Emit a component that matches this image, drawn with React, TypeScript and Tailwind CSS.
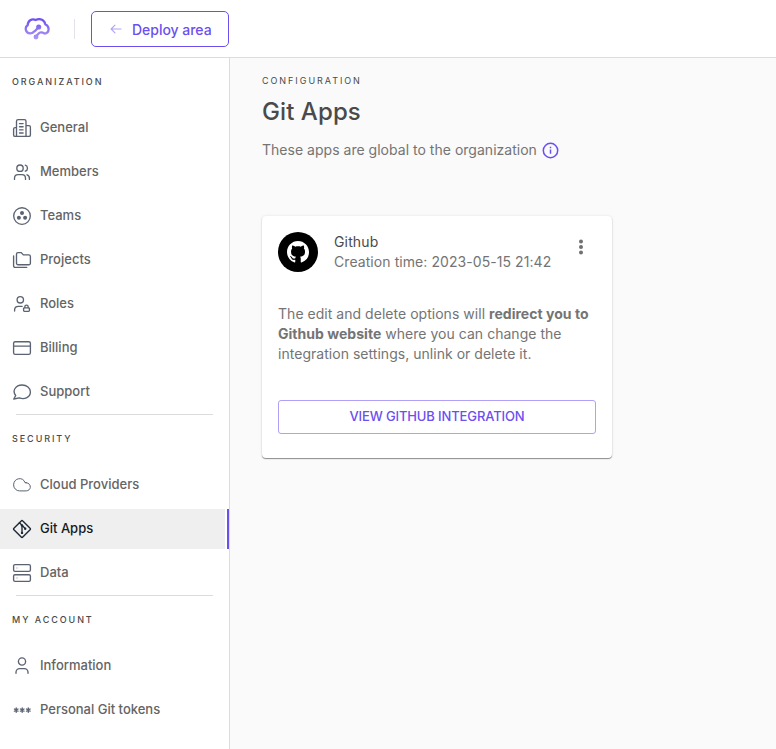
import type { ReactNode } from "react";

function Icon({ children }: { children: ReactNode }) {
  return (
    <svg
      width="20"
      height="20"
      viewBox="0 0 20 20"
      fill="none"
      stroke="currentColor"
      strokeWidth="1.35"
      strokeLinecap="round"
      strokeLinejoin="round"
      className="shrink-0"
    >
      {children}
    </svg>
  );
}

const icons = {
  general: (
    <Icon>
      <path d="M4.5 18.4V3.2A1.6 1.6 0 0 1 6.1 1.6h6.3A1.6 1.6 0 0 1 14 3.2v15.2M4.5 9.6H3.1a1.5 1.5 0 0 0-1.5 1.5v5.8a1.5 1.5 0 0 0 1.5 1.5h13.8a1.5 1.5 0 0 0 1.5-1.5V9.1a1.5 1.5 0 0 0-1.5-1.5H14M7.5 5.6h3.6M7.5 8.7h3.6M7.5 11.8h3.6M7.5 15h3.6" />
    </Icon>
  ),
  members: (
    <Icon>
      <circle cx="8" cy="6.2" r="3.2" />
      <path d="M2.5 17.4v-1.2c0-2.2 1.7-3.6 3.6-3.6h3.8c2 0 3.6 1.5 3.6 3.6v1.2M13.3 3.2c2.9.8 2.9 5.1 0 6M15 12.8c1.6.5 2.4 1.8 2.4 3.4v1.2" />
    </Icon>
  ),
  teams: (
    <Icon>
      <circle cx="10" cy="10" r="8.3" />
      <g fill="currentColor" stroke="none">
        <circle cx="10" cy="7.1" r="2" />
        <circle cx="6.9" cy="11.8" r="2" />
        <circle cx="13.1" cy="11.8" r="2" />
      </g>
    </Icon>
  ),
  projects: (
    <Icon>
      <path d="M4.5 13.2V4.1a1.5 1.5 0 0 1 1.5-1.5h3.3l2 2.3h5.6a1.5 1.5 0 0 1 1.5 1.5v6.8a1.5 1.5 0 0 1-1.5 1.5H6a1.5 1.5 0 0 1-1.5-1.5ZM1.6 5.8v10.1a1.5 1.5 0 0 0 1.5 1.5h11.6" />
    </Icon>
  ),
  roles: (
    <Icon>
      <circle cx="8.3" cy="5.8" r="3.2" />
      <path d="M2.6 17v-.9c0-2.3 1.7-3.7 3.8-3.7h3.7" />
      <rect x="11.6" y="13.8" width="5.8" height="3.6" rx=".8" />
      <path d="M12.8 13.6v-.7c0-2.3 3.4-2.3 3.4 0v.7" />
    </Icon>
  ),
  billing: (
    <Icon>
      <rect x="1.6" y="3.7" width="16.8" height="12.7" rx="1.6" />
      <path d="M1.6 8.1h16.8" />
    </Icon>
  ),
  support: (
    <Icon>
      <path d="M3.7 13.5C-.2 8.8 3.7 3 10 3c4.8 0 8.4 2.9 8.4 6.9 0 5-5.6 8.1-11.1 5.9L1.8 17Z" />
    </Icon>
  ),
  cloud: (
    <Icon>
      <path d="M14 7.7h-1C11.3 1.3 1.6 2.8 1.6 9.9a6 6 0 0 0 6 6h6.6c5.6-.3 5.6-8-.2-8.2Z" strokeWidth="1" />
    </Icon>
  ),
  git: (
    <Icon>
      <path d="M9.2 1.9 1.9 9.2a1.1 1.1 0 0 0 0 1.6l7.3 7.3a1.1 1.1 0 0 0 1.6 0l7.3-7.3a1.1 1.1 0 0 0 0-1.6l-7.3-7.3a1.1 1.1 0 0 0-1.6 0Z" strokeWidth="1.4" />
      <path d="m7.4 3.8 2.6 2.5v8M10 6.3l3.2 3.2" />
      <g fill="currentColor" stroke="none">
        <circle cx="10" cy="6.5" r="1.2" />
        <circle cx="10" cy="13.9" r="1.2" />
        <circle cx="13.2" cy="9.8" r="1.2" />
      </g>
    </Icon>
  ),
  data: (
    <Icon>
      <rect x="1.6" y="1.6" width="16.8" height="6.7" rx="1.4" />
      <rect x="1.6" y="11.7" width="16.8" height="6.7" rx="1.4" />
      <path d="M5 5h.01M5 15h.01" strokeOpacity="0.5" />
    </Icon>
  ),
  information: (
    <Icon>
      <circle cx="10" cy="5.5" r="3.6" />
      <path d="M4 17.3v-1.1a3.6 3.6 0 0 1 3.6-3.6h4.8a3.6 3.6 0 0 1 3.6 3.6v1.1" />
    </Icon>
  ),
  tokens: (
    <Icon>
      <path d="M4.2 8v4.2M2.4 9l3.6 2.1M6 9l-3.6 2.1M10.2 8v4.2M8.4 9l3.6 2.1M12 9l-3.6 2.1M16.3 8v4.2M14.5 9l3.6 2.1M18.1 9l-3.6 2.1" />
    </Icon>
  ),
};

type Item = { label: string; icon: ReactNode; active?: boolean };

const sections: { title: string; items: Item[] }[] = [
  {
    title: "ORGANIZATION",
    items: [
      { label: "General", icon: icons.general },
      { label: "Members", icon: icons.members },
      { label: "Teams", icon: icons.teams },
      { label: "Projects", icon: icons.projects },
      { label: "Roles", icon: icons.roles },
      { label: "Billing", icon: icons.billing },
      { label: "Support", icon: icons.support },
    ],
  },
  {
    title: "SECURITY",
    items: [
      { label: "Cloud Providers", icon: icons.cloud },
      { label: "Git Apps", icon: icons.git, active: true },
      { label: "Data", icon: icons.data },
    ],
  },
  {
    title: "MY ACCOUNT",
    items: [
      { label: "Information", icon: icons.information },
      { label: "Personal Git tokens", icon: icons.tokens },
    ],
  },
];

function NavItem({ label, icon, active }: Item) {
  return (
    <a
      className={
        active
          ? "flex h-10 items-center justify-between text-[#16191f]"
          : "flex h-10 items-center justify-between text-[#646464]"
      }
    >
      <span
        className={
          active
            ? "flex h-10 w-[225px] items-center gap-2 bg-[#efefef] pl-3"
            : "flex h-10 w-[225px] items-center gap-2 pl-3"
        }
      >
        <span className={active ? "text-[#1f2937]" : "text-[#5b6372]"}>{icon}</span>
        <span className="pb-0.5 text-[13px] leading-5 font-medium">{label}</span>
      </span>
      {active && <span className="h-10 w-0.5 bg-[#6b4ff0]" />}
    </a>
  );
}

function Logo() {
  return (
    <svg width="26" height="24" viewBox="0 0 26 24" fill="none" stroke="url(#brand)" strokeWidth="2.3" strokeLinecap="round" strokeLinejoin="round">
      <defs>
        <linearGradient id="brand" x1="13" y1="1" x2="13" y2="23" gradientUnits="userSpaceOnUse">
          <stop stopColor="#6c4cf1" />
          <stop offset="1" stopColor="#b19bf2" />
        </linearGradient>
      </defs>
      <path d="M14.4 10.5 11.7 13.3C9.8 15.1 8.4 16.4 5.9 16.3 1.4 16 .4 10.2 3.7 8.2 3.8 3.8 7.8 1.3 11.6 3 16.3.8 20.7 3.2 21.2 7.2 26 9.4 25.6 16.2 20.5 16.5 17.2 14.8 16 15 14.4 16.7L12 19.6" />
      <circle cx="14.7" cy="10" r="1.4" fill="url(#brand)" />
      <circle cx="12" cy="20" r="1.3" fill="url(#brand)" />
    </svg>
  );
}

function GithubMark() {
  return (
    <svg width="22" height="22" viewBox="0 0 16 16" fill="white">
      <path d="M8 0C3.58 0 0 3.58 0 8c0 3.54 2.29 6.53 5.47 7.59.4.07.55-.17.55-.38 0-.19-.01-.82-.01-1.49-2.01.37-2.53-.49-2.69-.94-.09-.23-.48-.94-.82-1.13-.28-.15-.68-.52-.01-.53.63-.01 1.08.58 1.23.82.72 1.21 1.87.87 2.33.66.07-.52.28-.87.51-1.07-1.78-.2-3.64-.89-3.64-3.95 0-.87.31-1.59.82-2.15-.08-.2-.36-1.02.08-2.12 0 0 .67-.21 2.2.82.64-.18 1.32-.27 2-.27s1.36.09 2 .27c1.53-1.04 2.2-.82 2.2-.82.44 1.1.16 1.92.08 2.12.51.56.82 1.27.82 2.15 0 3.07-1.87 3.75-3.65 3.95.29.25.54.73.54 1.48 0 1.07-.01 1.93-.01 2.2 0 .21.15.46.55.38A8.01 8.01 0 0 0 16 8c0-4.42-3.58-8-8-8Z" />
    </svg>
  );
}

export default function App() {
  return (
    <div className="flex h-screen flex-col overflow-hidden bg-[#fafafa] font-['Inter',sans-serif] text-[#4a4a4a]">
      <header className="flex h-[58px] shrink-0 items-center border-b border-[#dcdcdc] bg-white pl-6">
        <Logo />
        <span className="ml-6 h-5 w-px bg-[#e2e2ea]" />
        <button className="ml-4 flex h-9 w-[138px] items-center rounded-[5px] border border-[#6b4ff0] pl-[18px] text-sm font-medium tracking-[-0.03px] text-[#6b4ff0]">
          <svg width="12" height="10" viewBox="0 0 12 10" fill="none" stroke="#b3a3f6" strokeWidth="1.1" strokeLinecap="round" strokeLinejoin="round">
            <path d="M11 5H1.2M5 1.1 1.1 5 5 8.9" />
          </svg>
          <span className="ml-2.5 pt-0.5">Deploy area</span>
        </button>
      </header>

      <div className="flex min-h-0 flex-1">
        <aside className="w-[230px] shrink-0 border-r border-[#dcdcdc] bg-white">
          {sections.map((section, i) => (
            <section key={section.title}>
              {i > 0 && <hr className="mt-0.5 mr-4 ml-4 border-[#dcdcdc]" />}
              <h2 className="flex h-[50px] items-start pt-4 pl-3 text-[9px] leading-4 font-medium tracking-[1.93px]">
                {section.title}
              </h2>
              <nav className="flex flex-col gap-1">
                {section.items.map((item) => (
                  <NavItem key={item.label} {...item} />
                ))}
              </nav>
            </section>
          ))}
        </aside>

        <main className="flex-1 px-8 pt-[15px]">
          <p className="text-[9px] leading-4 tracking-[1.95px]">CONFIGURATION</p>
          <h1 className="mt-[7px] text-2xl leading-8 font-medium tracking-[0.08px]">Git Apps</h1>
          <div className="mt-3 flex h-5 items-center gap-[5px] text-sm text-[#747474]">
            <span className="tracking-[0.02px]">These apps are global to the organization</span>
            <svg width="17" height="17" viewBox="0 0 17 17" fill="none" stroke="#6b4ff0" strokeWidth="1.5">
              <circle cx="8.5" cy="8.5" r="7.2" />
              <path d="M8.5 7.5v4.3M8.5 4.8v1.4" />
            </svg>
          </div>

          <article className="mt-14 flex h-[242px] w-[350px] flex-col rounded bg-white p-4 shadow-[0_1px_1px_rgba(0,0,0,0.42),0_0_3px_rgba(0,0,0,0.1)]">
            <div className="flex items-center">
              <span className="flex size-10 items-center justify-center rounded-full bg-black">
                <GithubMark />
              </span>
              <div className="ml-4 text-sm leading-5 tracking-[0.07px]">
                <p className="tracking-[0.15px]">Github</p>
                <p className="text-[#747474]">Creation time: 2023-05-15 21:42</p>
              </div>
              <svg width="6" height="16" viewBox="0 0 6 16" className="mr-3 mb-2.5 ml-auto" fill="#707070">
                <circle cx="3" cy="2.5" r="2" />
                <circle cx="3" cy="8" r="2" />
                <circle cx="3" cy="13.5" r="2" />
              </svg>
            </div>
            <p className="mt-8 text-sm leading-5 tracking-[0.03px] whitespace-nowrap text-[#747474]">
              The edit and delete options will <b>redirect you to</b>
              <br />
              <b>Github website</b> where you can change the
              <br />
              integration settings, unlink or delete it.
            </p>
            <button className="mt-9 h-[34px] shrink-0 rounded-[3px] border border-[#b0a0f7] text-[13px] font-medium tracking-[-0.12px] text-[#6b4ff0]">
              VIEW GITHUB INTEGRATION
            </button>
          </article>
        </main>
      </div>
    </div>
  );
}
